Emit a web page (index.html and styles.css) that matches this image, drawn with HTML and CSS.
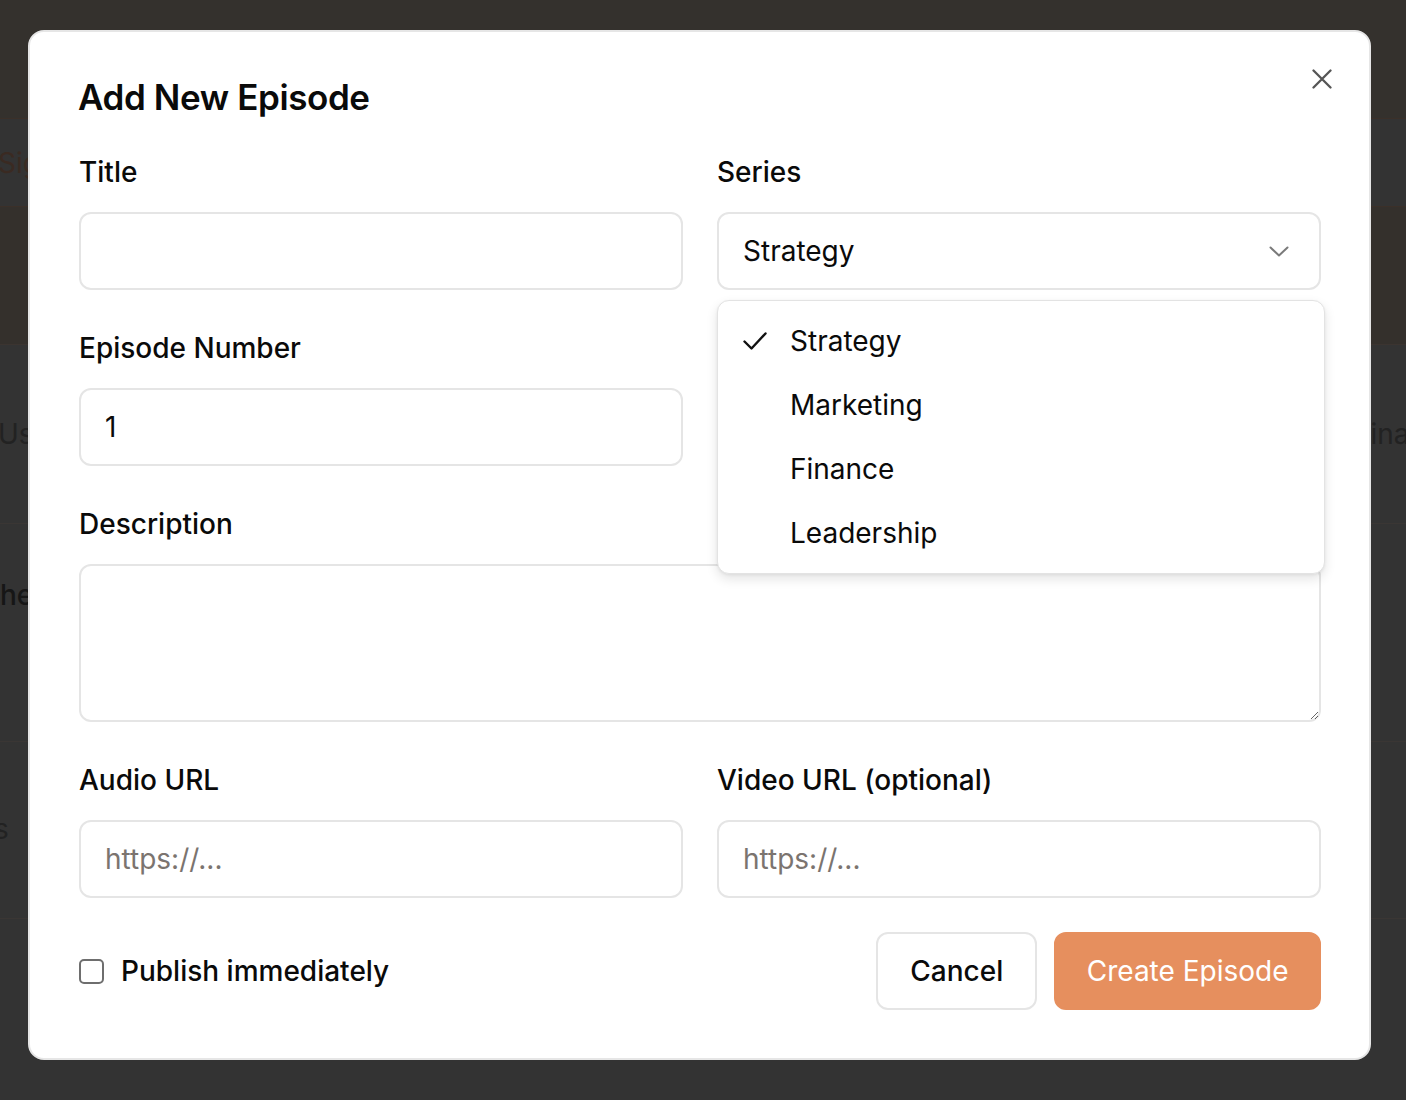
FILE: index.html
```html
<!DOCTYPE html>
<html lang="en">
<head>
<meta charset="utf-8">
<title>Add New Episode</title>
<link rel="stylesheet" href="styles.css">
</head>
<body>
<div class="page">
  <div class="bg-top"></div>
  <div class="bg-row r1"><span class="bg-text brown">Signals</span></div>
  <div class="bg-row r2 warm"></div>
  <div class="bg-row r3"><span class="bg-text">Users</span><span class="bg-text">Financial</span></div>
  <div class="bg-row r4"><span class="bg-text strong">he</span></div>
  <div class="bg-row r5"><span class="bg-text">s</span></div>
  <div class="bg-row r6"></div>
</div>

<div class="overlay">
  <div class="modal">
    <button class="close" aria-label="Close">
      <svg width="20" height="20" viewBox="0 0 20 20"><path d="M1.5 1.5L18.5 18.5M18.5 1.5L1.5 18.5" fill="none" stroke="#555" stroke-width="2.3" stroke-linecap="round"/></svg>
    </button>
    <h2 class="modal-title">Add New Episode</h2>

    <div class="form-grid">
      <div class="field">
        <label class="label">Title</label>
        <input class="input" type="text">
      </div>
      <div class="field">
        <label class="label">Series</label>
        <div class="select-wrap">
          <div class="select">
            <span>Strategy</span>
            <svg width="20" height="11" viewBox="0 0 20 11"><path d="M1.5 1.5L10 9.5L18.5 1.5" fill="none" stroke="#7a7a7a" stroke-width="2" stroke-linecap="round" stroke-linejoin="round"/></svg>
          </div>
          <div class="menu">
            <div class="menu-item">
              <svg class="check" width="24" height="24" viewBox="0 0 24 24"><path d="M1.5 12.5L8.5 19.5L22.5 4.5" fill="none" stroke="#111" stroke-width="2.4" stroke-linecap="round" stroke-linejoin="round"/></svg>
              <span>Strategy</span>
            </div>
            <div class="menu-item"><span class="check"></span><span>Marketing</span></div>
            <div class="menu-item"><span class="check"></span><span>Finance</span></div>
            <div class="menu-item"><span class="check"></span><span>Leadership</span></div>
          </div>
        </div>
      </div>
      <div class="field">
        <label class="label">Episode Number</label>
        <input class="input" type="text" value="1">
      </div>
      <div></div>
      <div class="field span2">
        <label class="label">Description</label>
        <textarea class="textarea"></textarea>
      </div>
      <div class="field">
        <label class="label">Audio URL</label>
        <input class="input" type="text" placeholder="https://...">
      </div>
      <div class="field">
        <label class="label">Video URL (optional)</label>
        <input class="input" type="text" placeholder="https://...">
      </div>
    </div>

    <div class="footer">
      <label class="check-row"><span class="checkbox"></span><span>Publish immediately</span></label>
      <div class="actions">
        <button class="btn btn-secondary">Cancel</button>
        <button class="btn btn-primary">Create Episode</button>
      </div>
    </div>
  </div>
</div>
</body>
</html>
```

FILE: styles.css
```css
* { box-sizing: border-box; }

html, body {
  margin: 0;
  padding: 0;
  width: 1406px;
  height: 1100px;
  overflow: hidden;
  background: #333333;
  font-family: Inter, "Noto Sans", "Liberation Sans", sans-serif;
}

/* underlying page (already dimmed) */
.page {
  display: flex;
  flex-direction: column;
  height: 1100px;
}
.bg-top {
  height: 119px;
  background: #34312d;
  border-bottom: 1px solid #3b3029;
}
.bg-row {
  display: grid;
  grid-template-columns: 1356px 1fr;
  align-items: center;
  background: #333333;
  border-bottom: 1px solid #3a3634;
  font-size: 28px;
  color: #222222;
  overflow: hidden;
  white-space: nowrap;
}
.bg-row.warm { background: #34302c; border-bottom-color: #3b3430; }
.r1 { height: 88px; border-bottom-color: #3b3029; }
.r2 { height: 138px; }
.r3 { height: 179px; }
.r4 { height: 218px; }
.r5 { height: 177px; }
.r6 { flex: 1; border-bottom: 0; }
.bg-text { padding-left: 0; margin-left: -2px; }
.bg-text.brown { color: #3a2a22; }
.bg-text.strong { color: #161616; font-weight: 500; margin-left: 0; align-self: start; padding-top: 54px; }
.r5 .bg-text { align-self: start; padding-top: 70px; margin-left: -6px; }

/* overlay + modal */
.overlay {
  position: fixed;
  inset: 0;
}
.modal {
  position: absolute;
  left: 28px;
  top: 30px;
  width: 1343px;
  height: 1030px;
  background: #ffffff;
  border: 2px solid #e6e6e6;
  border-radius: 16px;
  padding: 45px 48px 48px 49px;
  color: #0a0a0a;
}
.close {
  position: absolute;
  top: 35px;
  right: 35px;
  width: 24px;
  height: 24px;
  padding: 0;
  border: 0;
  background: none;
  display: flex;
  align-items: center;
  justify-content: center;
}
.modal-title {
  margin: 0 0 0 -1px;
  font-size: 35px;
  line-height: 40px;
  font-weight: 600;
  letter-spacing: -0.4px;
}

.form-grid {
  margin-top: 35px;
  display: grid;
  grid-template-columns: 1fr 1fr;
  column-gap: 34px;
  row-gap: 38px;
}
.field { display: flex; flex-direction: column; }
.span2 { grid-column: 1 / span 2; }
.label {
  font-size: 28px;
  line-height: 40px;
  font-weight: 500;
  margin-bottom: 20px;
}
.input, .select, .textarea {
  height: 78px;
  width: 100%;
  border: 2px solid #e5e5e5;
  border-radius: 12px;
  padding: 0 24px;
  font-family: inherit;
  font-size: 28px;
  color: #0a0a0a;
  background: #fff;
  outline: none;
}
.input::placeholder { color: #7b746f; }
.textarea {
  height: 158px;
  padding: 16px 24px;
  resize: vertical;
  display: block;
}

.select-wrap { position: relative; }
.select {
  display: flex;
  align-items: center;
  justify-content: space-between;
  padding-right: 30px;
}
.menu {
  position: absolute;
  z-index: 5;
  top: 88px;
  left: 0;
  width: 608px;
  background: #fff;
  border: 1px solid #e3e3e3;
  border-radius: 12px;
  box-shadow: 0 5px 12px rgba(0,0,0,0.11), 0 1px 3px rgba(0,0,0,0.06);
  padding: 8px 0;
}
.menu-item {
  height: 64px;
  display: flex;
  align-items: center;
  gap: 23px;
  padding-left: 25px;
  font-size: 28px;
  color: #0a0a0a;
}
.check { width: 24px; height: 24px; flex: none; }

.footer {
  margin-top: 34px;
  display: flex;
  align-items: center;
  justify-content: space-between;
}
.check-row {
  display: flex;
  align-items: center;
  gap: 17px;
  font-size: 28px;
  font-weight: 500;
}
.checkbox {
  width: 25px;
  height: 25px;
  border: 2px solid #6e6e6e;
  border-radius: 5px;
  background: #fff;
}
.actions { display: flex; gap: 17px; }
.btn {
  height: 78px;
  padding: 0 32px;
  border-radius: 12px;
  font-family: inherit;
  font-size: 28px;
  font-weight: 500;
}
.btn-secondary {
  background: #fff;
  border: 2px solid #e5e5e5;
  color: #0a0a0a;
}
.btn-primary {
  background: #e68f5e;
  border: 2px solid #e68f5e;
  color: #fff;
  font-weight: 400;
  padding: 0 30.5px;
}
```
